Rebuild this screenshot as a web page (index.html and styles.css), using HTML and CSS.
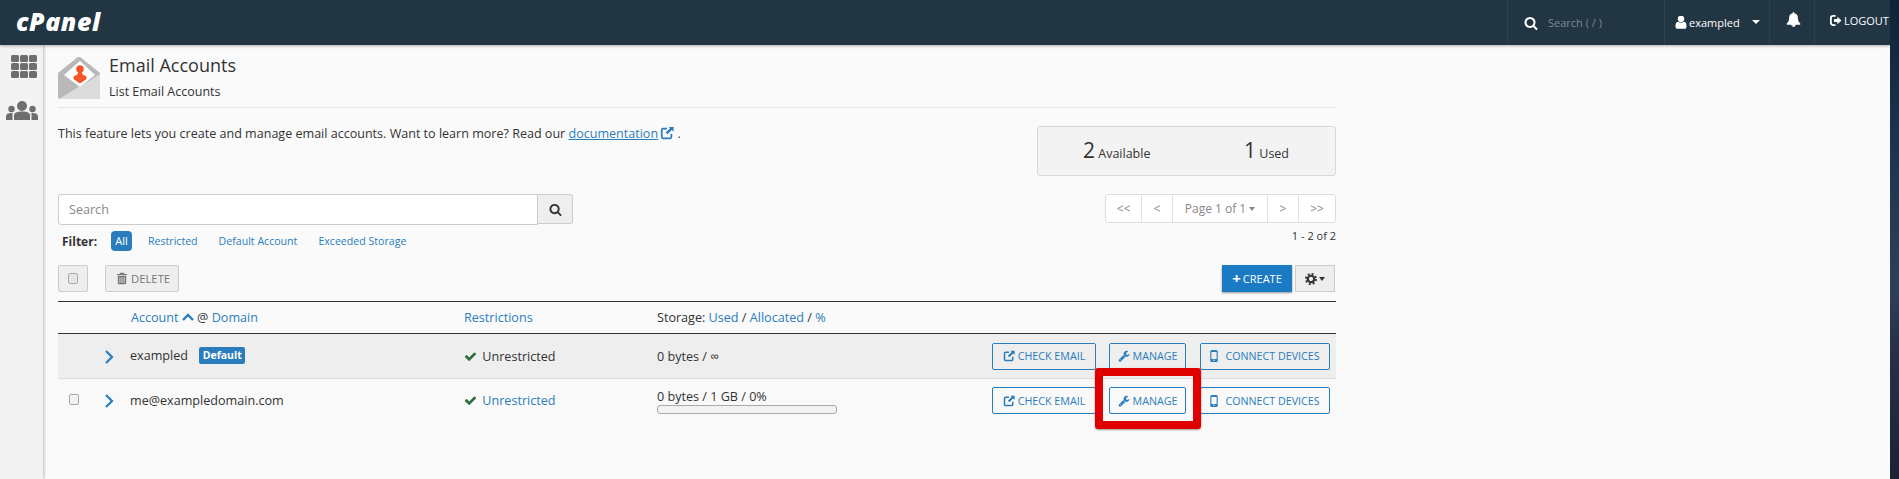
FILE: index.html
```html
<!DOCTYPE html>
<html lang="en">
<head>
<meta charset="utf-8">
<title>Email Accounts</title>
<link rel="stylesheet" href="styles.css">
</head>
<body>
<svg class="defs" width="0" height="0" aria-hidden="true">
  <defs>
    <symbol id="i-search" viewBox="0 0 1792 1792"><path d="M1216 832q0-185-131.500-316.500t-316.500-131.500-316.500 131.500-131.500 316.500 131.500 316.500 316.500 131.500 316.500-131.500 131.500-316.500zm512 832q0 52-38 90t-90 38q-54 0-90-38l-343-342q-179 124-399 124-143 0-273.500-55.500t-225-150-150-225-55.500-273.500 55.500-273.500 150-225 225-150 273.500-55.500 273.500 55.500 225 150 150 225 55.500 273.500q0 220-124 399l343 343q37 37 37 90z"/></symbol>
    <symbol id="i-check" viewBox="0 0 1792 1792"><path d="M1671 566q0 40-28 68l-724 724-136 136q-28 28-68 28t-68-28l-136-136-362-362q-28-28-28-68t28-68l136-136q28-28 68-28t68 28l294 295 656-657q28-28 68-28t68 28l136 136q28 28 28 68z"/></symbol>
    <symbol id="i-wrench" viewBox="0 0 1792 1792"><path d="M448 1472q0-26-19-45t-45-19-45 19-19 45 19 45 45 19 45-19 19-45zm644-420l-682 682q-37 37-90 37-52 0-91-37l-106-108q-38-36-38-90 0-53 38-91l681-681q39 98 114.500 173.500t173.500 114.500zm634-435q0 39-23 106-47 134-164.500 217.500t-258.500 83.500q-185 0-316.500-131.500t-131.500-316.500 131.500-316.500 316.500-131.500q58 0 121.500 16.500t107.500 46.500q16 11 16 28t-16 28l-293 169v224l193 107q5-3 79-48.500t135.500-81 70.500-35.500q15 0 23.500 10t8.500 25z"/></symbol>
    <symbol id="i-link" viewBox="0 0 16 16"><path d="M8 3H3.500A1.500 1.500 0 0 0 2 4.500v8A1.500 1.500 0 0 0 3.500 14h8a1.500 1.500 0 0 0 1.500-1.500V9" fill="none" stroke="currentColor" stroke-width="2"/><path d="M10 1h5.500v5.500l-2-2L8.500 9.500 6.500 7.500l5-5z"/></symbol>
    <symbol id="i-mobile" viewBox="0 0 10 16"><path fill-rule="evenodd" d="M2 0h6a2 2 0 0 1 2 2v12a2 2 0 0 1-2 2H2a2 2 0 0 1-2-2V2a2 2 0 0 1 2-2zM1.500 2.500v9.500h7V2.500zM5 12.800a1 1 0 1 0 0 2 1 1 0 0 0 0-2z"/></symbol>
    <symbol id="i-chev" viewBox="0 0 10 16"><path d="M2 2l6 6-6 6" fill="none" stroke="currentColor" stroke-width="2.200"/></symbol>
  </defs>
</svg>
<div class="window">
  <header class="topbar">
    <span class="logo">cPanel</span>
    <div class="nav">
      <div class="nav-item nav-search">
        <svg class="ic-14"><use href="#i-search"/></svg>
        <span class="nav-ph">Search ( / )</span>
      </div>
      <div class="nav-item nav-user">
        <svg class="ic-user" viewBox="200 180 1392 1500"><path d="M1536 1399q0 109-62.500 187t-150.500 78h-854q-88 0-150.500-78t-62.500-187q0-85 8.500-160.500t31.500-152 58.500-131 94-89 134.500-34.500q131 128 313 128t313-128q76 0 134.500 34.500t94 89 58.500 131 31.500 152 8.500 160.500zm-256-887q0 159-112.500 271.500t-271.500 112.500-271.500-112.500-112.500-271.500 112.500-271.500 271.500-112.500 271.500 112.500 112.500 271.500z"/></svg>
        <span class="nav-name">exampled</span>
        <span class="caret caret-nav"></span>
      </div>
      <div class="nav-item nav-bell">
        <svg class="ic-15" viewBox="0 0 1792 1792"><path d="M912 1696q0-16-16-16-59 0-101.500-42.500t-42.500-101.500q0-16-16-16t-16 16q0 73 51.500 124.500t124.500 51.500q16 0 16-16zm816-288q0 52-38 90t-90 38h-448q0 106-75 181t-181 75-181-75-75-181h-448q-52 0-90-38t-38-90q50-42 91-88t85-119.500 74.500-158.500 50-206 19.500-260q0-152 117-282.500t307-158.500q-8-19-8-39 0-40 28-68t68-28 68 28 28 68q0 20-8 39 190 28 307 158.500t117 282.500q0 139 19.500 260t50 206 74.500 158.500 85 119.500 91 88z"/></svg>
      </div>
      <div class="nav-item nav-logout">
        <svg class="ic-13" viewBox="0 0 14 14"><path d="M7 2H4.500A2.500 2.500 0 0 0 2 4.500v5A2.500 2.500 0 0 0 4.500 12H7" fill="none" stroke="currentColor" stroke-width="2"/><path d="M5.500 5.500H9V3l4.500 4L9 11V8.500H5.500z"/></svg>
        <span>LOGOUT</span>
      </div>
    </div>
  </header>
  <div class="main">
    <aside class="sidebar">
      <svg class="side-grid" viewBox="0 0 26 23">
        <rect width="8" height="7" rx="1.500"/><rect x="9" width="8" height="7" rx="1.500"/><rect x="18" width="8" height="7" rx="1.500"/>
        <rect y="8" width="8" height="7" rx="1.500"/><rect x="9" y="8" width="8" height="7" rx="1.500"/><rect x="18" y="8" width="8" height="7" rx="1.500"/>
        <rect y="16" width="8" height="7" rx="1.500"/><rect x="9" y="16" width="8" height="7" rx="1.500"/><rect x="18" y="16" width="8" height="7" rx="1.500"/>
      </svg>
      <svg class="side-users" viewBox="0 0 32 19">
        <circle cx="16" cy="5" r="5"/><circle cx="5.500" cy="8" r="3.200"/><circle cx="26.500" cy="8" r="3.200"/>
        <path d="M8 19v-4.500C8 11.500 11 10.500 16 10.500s8 1 8 4v4.500z"/>
        <path d="M0 19v-3.500C0 13 2 12 5.500 12c.7 0 1 .1 1.300.2C6.300 13 6.500 14 6.500 15v4z"/>
        <path d="M32 19v-3.500C32 13 30 12 26.500 12c-.7 0-1 .1-1.300.2.500.8.300 1.800.300 2.800v4z"/>
      </svg>
    </aside>
    <main class="content">
      <div class="page-head">
        <svg class="mail-icon" viewBox="0 0 42 43">
          <path d="M0 17L19.500 1.200a4 4 0 0 1 3 0L42 17v24a2 2 0 0 1-2 2H2a2 2 0 0 1-2-2z" fill="#b9b9b9"/>
          <path d="M42 18v25H22V31z" fill="#dcdcdc"/>
          <path d="M1 43l21-13 20 13z" fill="#dcdcdc"/>
          <path d="M22 5L6 19l16 12 15-12z" fill="#fff"/>
          <circle cx="22" cy="13" r="3.800" fill="#f4562a"/>
          <path d="M20 16h4l.5 2.500 4 2v2.500L22 27.500 15.500 23v-2.500l4-2z" fill="#f4562a"/>
        </svg>
        <div class="page-titles">
          <h1 class="title">Email Accounts</h1>
          <p class="subtitle">List Email Accounts</p>
        </div>
      </div>
      <div class="intro-row">
        <p class="intro">This feature lets you create and manage email accounts. Want to learn more? Read our <a class="link link-u">documentation</a><svg class="ic-doc link-color"><use href="#i-link"/></svg> .</p>
        <div class="stats">
          <div class="stat"><span class="stat-num">2</span> Available</div>
          <div class="stat"><span class="stat-num">1</span> Used</div>
        </div>
      </div>
      <div class="controls">
        <div class="controls-left">
          <div class="search">
            <div class="search-input">Search</div>
            <div class="search-btn"><svg class="ic-13 dark"><use href="#i-search"/></svg></div>
          </div>
          <div class="filters">
            <strong class="filter-label">Filter:</strong>
            <span class="pill">All</span>
            <a class="link filter">Restricted</a>
            <a class="link filter">Default Account</a>
            <a class="link filter">Exceeded Storage</a>
          </div>
        </div>
        <div class="controls-right">
          <div class="pager">
            <span class="pg pg-wide">&lt;&lt;</span>
            <span class="pg pg-nar">&lt;</span>
            <span class="pg pg-page">Page 1 of 1<span class="caret caret-sm"></span></span>
            <span class="pg pg-nar">&gt;</span>
            <span class="pg pg-wide">&gt;&gt;</span>
          </div>
          <div class="range">1 - 2 of 2</div>
        </div>
      </div>
      <div class="toolbar">
        <div class="tool-left">
          <div class="btn-off btn-check"><span class="cb cb-off"></span></div>
          <div class="btn-off btn-del">
            <svg class="ic-trash" viewBox="0 0 12 14"><path d="M4 0h4l1 1.500h3v1.500H0V1.500h3zM1 4h10v8.500a1.500 1.500 0 0 1-1.500 1.500h-7A1.500 1.500 0 0 1 1 12.500zm2 1.500v7h1v-7zm2.500 0v7h1v-7zm2.500 0v7h1v-7z" fill-rule="evenodd"/></svg>
            <span>DELETE</span>
          </div>
        </div>
        <div class="tool-right">
          <div class="btn-create"><span class="plus">+</span>CREATE</div>
          <div class="btn-gear">
            <svg class="ic-gear" viewBox="0 0 14 14"><circle cx="7" cy="7" r="3.800" fill="none" stroke="currentColor" stroke-width="2.600"/><circle cx="7" cy="7" r="6" fill="none" stroke="currentColor" stroke-width="2" stroke-dasharray="2.400 2.312"/></svg>
            <span class="caret caret-dark"></span>
          </div>
        </div>
      </div>
      <table class="accounts">
        <colgroup>
          <col class="c-check"><col class="c-exp"><col class="c-acct"><col class="c-restr"><col class="c-stor"><col>
        </colgroup>
        <thead>
          <tr>
            <th></th><th></th>
            <th class="th-acct"><a class="link">Account</a> <svg class="ic-up link-color" viewBox="0 0 12 8"><path d="M1 7l5-5 5 5" fill="none" stroke="currentColor" stroke-width="2.400"/></svg> @ <a class="link">Domain</a></th>
            <th><a class="link">Restrictions</a></th>
            <th>Storage: <a class="link">Used</a> / <a class="link">Allocated</a> / <a class="link">%</a></th>
            <th></th>
          </tr>
        </thead>
        <tbody>
          <tr class="row-default">
            <td></td>
            <td><svg class="ic-chev link-color"><use href="#i-chev"/></svg></td>
            <td class="cell-up">exampled <span class="badge">Default</span></td>
            <td><svg class="ic-13 ok"><use href="#i-check"/></svg> Unrestricted</td>
            <td>0 bytes / ∞</td>
            <td class="actions">
              <a class="btn-line btn-ce"><svg class="ic-12"><use href="#i-link"/></svg>CHECK EMAIL</a>
              <a class="btn-line btn-mg"><svg class="ic-12"><use href="#i-wrench"/></svg>MANAGE</a>
              <a class="btn-line btn-cd"><svg class="ic-mob"><use href="#i-mobile"/></svg>CONNECT DEVICES</a>
            </td>
          </tr>
          <tr class="row-user">
            <td class="cb-cell"><span class="cb"></span></td>
            <td><svg class="ic-chev link-color"><use href="#i-chev"/></svg></td>
            <td>me@exampledomain.com</td>
            <td><svg class="ic-13 ok"><use href="#i-check"/></svg> <a class="link">Unrestricted</a></td>
            <td class="stor-cell">
              <div class="stor-text">0 bytes / 1 GB / 0%</div>
              <div class="progress"></div>
            </td>
            <td class="actions">
              <a class="btn-line btn-ce"><svg class="ic-12"><use href="#i-link"/></svg>CHECK EMAIL</a>
              <span class="mark-wrap">
                <a class="btn-line btn-mg"><svg class="ic-12"><use href="#i-wrench"/></svg>MANAGE</a>
                <span class="redbox"></span>
              </span>
              <a class="btn-line btn-cd"><svg class="ic-mob"><use href="#i-mobile"/></svg>CONNECT DEVICES</a>
            </td>
          </tr>
        </tbody>
      </table>
    </main>
  </div>
</div>
</body>
</html>
```
FILE: styles.css
```css
* { box-sizing: border-box; }
html, body { height: 100%; }
body {
  margin: 0;
  overflow: hidden;
  font-family: "Open Sans", "Liberation Sans", sans-serif;
  font-size: 12.600px;
  color: #333;
  background: linear-gradient(180deg, #0f2238 0%, #1d3350 30%, #2e4058 60%, #26324a 72%, #1c2234 100%);
}
.defs { position: absolute; }
svg { fill: currentColor; flex: none; }
p, h1 { margin: 0; }
a { text-decoration: none; }

.window { width: 1890px; height: 479px; display: flex; flex-direction: column; background: #fafafa; overflow: hidden; }

/* top bar */
.topbar {
  height: 45px; flex: none; background: #223543; color: #fff;
  display: flex; justify-content: space-between; align-items: stretch;
  box-shadow: 0 1px 3px rgba(0,0,0,.3); position: relative; z-index: 2;
}
.logo {
  margin-left: 16px; align-self: center; font: italic 800 25px/1 "Open Sans", sans-serif;
  letter-spacing: .5px; position: relative; top: -1px;
}
.nav { display: flex; align-items: stretch; font-size: 11px; }
.nav-item { display: flex; align-items: center; border-left: 1px solid #2c4150; }
.nav-search { width: 157px; padding-left: 16px; gap: 10px; }
.nav-ph { color: #7f8a92; font-size: 11px; }
.nav-user { width: 105px; padding-left: 10px; gap: 2px; padding-bottom: 1px; }
.nav-name { font-size: 11px; }
.nav-bell { width: 45px; padding-left: 16px; padding-bottom: 6px; }
.nav-logout { width: 76px; padding-left: 14px; gap: 2px; padding-bottom: 5px; }
.ic-15 { width: 15px; height: 15px; }
.ic-14 { width: 14px; height: 14px; }
.ic-13 { width: 13px; height: 13px; }
.ic-12 { width: 12px; height: 12px; }
.ic-user { width: 12px; height: 13px; }
.ic-doc { width: 14px; height: 14px; margin-left: 2px; }
.dark { color: #333; }
.caret { display: inline-block; width: 0; height: 0; border-left: 4px solid transparent; border-right: 4px solid transparent; border-top: 4px solid currentColor; }
.caret-nav { margin-left: 10px; }
.caret-sm { border-left-width: 3px; border-right-width: 3px; margin-left: 3px; vertical-align: 2px; border-top-color: #888; }
.caret-dark { border-left-width: 3.500px; border-right-width: 3.500px; }

/* layout */
.main { flex: 1; display: flex; min-height: 0; }
.sidebar {
  width: 43px; flex: none; background: #f3f3f3; display: flex; flex-direction: column; align-items: center;
  box-shadow: 1px 0 3px rgba(0,0,0,.25); padding: 10px 0 0 5px; color: #6e6e6e; gap: 23px;
}
.side-grid { width: 26px; height: 23px; }
.side-users { width: 32px; height: 19px; margin-left: -4px; }
.content { width: 1293px; padding: 11px 0 0 15px; }

/* header */
.page-head { display: flex; gap: 9px; height: 52px; border-bottom: 1px solid #e6e6e6; }
.mail-icon { width: 42px; height: 43px; }
.title { font-size: 18px; font-weight: 400; line-height: 20px; margin-top: -1px; }
.subtitle { font-size: 12.500px; line-height: 18px; margin-top: 8px; }

.intro-row { display: flex; justify-content: space-between; align-items: flex-start; margin-top: 18px; }
.intro { font-size: 12.550px; line-height: 18px; margin-top: -1px; }
.link { color: #2a7dbd; }
.link-u { text-decoration: underline; }
.link-color { color: #2a7dbd; vertical-align: -2px; }
.stats {
  width: 299px; height: 50px; background: #f3f3f3; border: 1px solid #d8d8d8; border-radius: 3px;
  display: flex; align-items: center; padding: 0 0 0 45px; font-size: 12.500px;
}
.stat { width: 161px; }
.stat:last-child { width: auto; }
.stat-num { font-size: 21px; line-height: 1; }

/* search, filter */
.controls { display: flex; justify-content: space-between; margin-top: 18px; height: 71px; }
.search { display: flex; width: 515px; height: 31px; }
.search-input {
  flex: 1; background: #fff; border: 1px solid #ccc; border-radius: 3px 0 0 3px; padding-left: 10px;
  line-height: 29px; color: #888; font-size: 12.600px;
}
.search-btn {
  width: 35px; height: 30px; background: #eee; border: 1px solid #ccc; border-left: 0; border-radius: 0 3px 3px 0;
  display: flex; align-items: center; justify-content: center;
}
.filters { display: flex; align-items: center; margin-top: 6px; height: 20px; font-size: 10.600px; }
.filter-label { font-size: 12px; margin: 0 0 0 4px; width: 49px; }
.pill { background: #2a7dbd; color: #fff; border-radius: 4px; width: 21px; height: 20px; line-height: 19px; text-align: center; font-size: 11px; margin-right: 16px; }
.filter { margin-right: 21px; }

.controls-right { text-align: right; width: 231px; }
.pager { display: flex; height: 29px; background: #fff; border: 1px solid #ddd; border-radius: 3px; color: #888; font-size: 12px; }
.pg { display: flex; align-items: center; justify-content: center; border-right: 1px solid #e2e2e2; }
.pg:last-child { border-right: 0; }
.pg-wide { width: 36px; }
.pg-nar { width: 31px; }
.pg-page { width: 95px; }
.range { font-size: 11px; line-height: 14px; margin-top: 6px; }

/* toolbar */
.toolbar { display: flex; justify-content: space-between; height: 27px; padding-right: 1px; }
.tool-left { display: flex; gap: 17px; }
.btn-off {
  height: 27px; background: #eee; border: 1px solid #ccc; border-radius: 2px; display: flex; align-items: center; color: #777;
}
.btn-check { width: 30px; justify-content: center; }
.btn-del { width: 74px; font-size: 11.300px; gap: 4px; padding-left: 11px; }
.ic-trash { width: 10px; height: 13px; }
.cb { display: inline-block; width: 10px; height: 11px; background: #f2f2f2; border: 1px solid #aaa; border-radius: 2px; }
.cb-off { background: #e6e6e6; }
.tool-right { display: flex; gap: 3px; }
.btn-create {
  width: 70px; height: 27px; background: #1a7bc4; color: #fff; font-size: 11px; display: flex; align-items: center; justify-content: center;
  box-shadow: 0 1px 2px rgba(0,0,0,.4);
}
.plus { font-size: 15px; font-weight: 700; line-height: 1; margin-right: 2px; }
.btn-gear {
  width: 40px; height: 27px; background: #eee; border: 1px solid #ccc; display: flex; align-items: center; justify-content: center; gap: 2px; color: #333;
}
.ic-gear { width: 12px; height: 12px; }

/* table */
.accounts { width: 1278px; table-layout: fixed; border-collapse: separate; border-spacing: 0; margin-top: 9px; }
.c-check { width: 42px; }
.c-exp { width: 25px; }
.c-acct { width: 334px; }
.c-restr { width: 193px; }
.c-stor { width: 300px; }
.accounts th {
  height: 33px; padding: 0 5px; font-size: 12.600px; font-weight: 400; text-align: left; white-space: nowrap;
  border-top: 1px solid #333; border-bottom: 1px solid #333;
}
.accounts .th-acct { padding-left: 6px; }
.accounts td { padding: 0 5px; height: 45px; vertical-align: middle; white-space: nowrap; border-bottom: 1px solid #ddd; }
.row-default td { background: #eee; }
.row-default .cell-up { padding-bottom: 2px; }
.row-user td { background: #f9f9f9; height: 43px; border-bottom: 0; }
.ic-up { width: 12px; height: 8px; vertical-align: 1px; }
.ic-chev { width: 10px; height: 16px; margin-left: -1px; vertical-align: -4px; }
.ok { color: #2e6b3e; vertical-align: -2px; margin-right: 2px; }
.badge {
  display: inline-block; background: #2a7dbd; color: #fff; font-size: 10.500px; font-weight: 700; border-radius: 2px;
  width: 46px; height: 17px; line-height: 17px; text-align: center; margin-left: 8px; vertical-align: 1px;
}
.row-user .cb-cell { text-align: left; padding: 0 0 0 11px; }
.row-user .stor-cell { padding-top: 2px; }
.stor-text { line-height: 16px; }
.progress { width: 180px; height: 9px; background: #f2f2f2; border: 1px solid #aaa; border-radius: 3px; }
.accounts .actions { text-align: right; font-size: 0; padding-right: 6px; }
.btn-line {
  display: inline-flex; align-items: center; justify-content: center; height: 27px; gap: 3px;
  border: 1px solid #2a7dbd; border-radius: 2px; color: #2a7dbd; background: transparent; font-size: 10.700px; vertical-align: top;
}
.btn-ce { width: 104px; margin-right: 13px; }
.btn-mg { width: 77px; }
.btn-cd { width: 130px; margin-left: 14px; }
.ic-mob { width: 8px; height: 12px; margin-right: 4px; }
.mark-wrap { position: relative; display: inline-block; vertical-align: top; }
.redbox {
  position: absolute; left: -14px; right: -15px; top: -19px; bottom: -15px;
  border: 8px solid #e00000; border-radius: 3px; box-shadow: 0 1px 2px rgba(0,0,0,.4);
}
```
